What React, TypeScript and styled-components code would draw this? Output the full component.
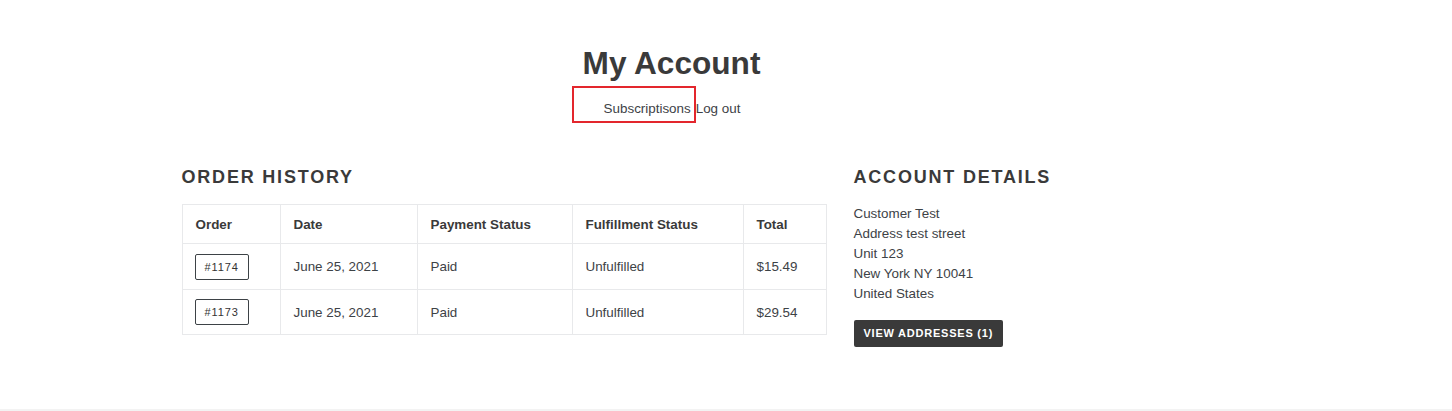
import React from 'react';
import styled, { createGlobalStyle } from 'styled-components';

const GlobalStyle = createGlobalStyle`
    html, body {
        margin: 0;
        padding: 0;
        background: #fff;
    }
    body {
        font-family: 'Liberation Sans', Arial, Helvetica, sans-serif;
        color: #3d4246;
        font-size: 13.4px;
        -webkit-font-smoothing: antialiased;
    }
`;

interface Order {
    number: string;
    date: string;
    payment: string;
    fulfillment: string;
    total: string;
}

const orders: Order[] = [
    { number: '#1174', date: 'June 25, 2021', payment: 'Paid', fulfillment: 'Unfulfilled', total: '$15.49' },
    { number: '#1173', date: 'June 25, 2021', payment: 'Paid', fulfillment: 'Unfulfilled', total: '$29.54' },
];

const addressLines = ['Customer Test', 'Address test street', 'Unit 123', 'New York NY 10041', 'United States'];

const Page = styled.main`
    height: 409px;
    border-bottom: 2px solid #f3f3f3;
`;

const Container = styled.div`
    width: 1090px;
    margin: 0 auto;
    padding-left: 1px;
`;

const Header = styled.header`
    padding: 44px 110px 0 0;
    text-align: center;
`;

const Title = styled.h1`
    margin: 0;
    font-size: 31.6px;
    line-height: 38px;
    font-weight: 700;
    color: #3a3a3a;
`;

const Nav = styled.nav`
    display: flex;
    justify-content: center;
    align-items: flex-end;
    padding-right: 31px;
    margin-top: 4px;
`;

const NavLink = styled.a<{ $outlined?: boolean }>`
    display: inline-block;
    color: #3d4246;
    text-decoration: none;
    line-height: 16px;
    border: ${p => (p.$outlined ? '2px solid #e3262d' : 'none')};
    padding: ${p => (p.$outlined ? '13px 3px 4px 30px' : '0 0 6px 0')};
`;

const Columns = styled.div`
    display: grid;
    grid-template-columns: 645px 1fr;
    column-gap: 27px;
    margin-top: 43px;
`;

const SectionTitle = styled.h2`
    margin: 0 0 16px;
    font-size: 18px;
    line-height: 22px;
    font-weight: 700;
    letter-spacing: 0.1em;
    text-transform: uppercase;
    color: #3a3a3a;
`;

const Table = styled.table`
    width: 645px;
    border-collapse: collapse;
    border: 1px solid #e8e9eb;
    table-layout: fixed;

    th, td {
        border: 1px solid #e8e9eb;
        text-align: left;
        padding: 0 0 0 13px;
    }
    th {
        font-weight: 700;
        color: #3a3a3a;
        height: 38px;
    }
    td {
        height: 44px;
    }
    tbody tr:first-child td {
        height: 45px;
    }
    td:first-child {
        padding-left: 12px;
    }
`;

const OrderTag = styled.a`
    display: inline-block;
    border: 1px solid #3d4246;
    border-radius: 2px;
    padding: 0 9px;
    height: 24px;
    line-height: 24px;
    font-size: 11px;
    letter-spacing: 0.08em;
    color: #333;
    text-decoration: none;
`;

const Address = styled.div`
    margin-top: 2px;
    line-height: 20px;
`;

const DarkButton = styled.a`
    display: inline-block;
    margin-top: 16px;
    background: #3a3a3a;
    color: #fff;
    border-radius: 2px;
    padding: 0 10px;
    height: 27px;
    line-height: 27px;
    font-size: 11px;
    font-weight: 700;
    letter-spacing: 0.07em;
    text-transform: uppercase;
    text-decoration: none;
`;

const App: React.FC = () => {
    return (
        <Page>
            <GlobalStyle />
            <Container>
                <Header>
                    <Title>My Account</Title>
                    <Nav>
                        <NavLink $outlined href="#">Subscriptisons</NavLink>
                        <NavLink href="#">Log out</NavLink>
                    </Nav>
                </Header>
                <Columns>
                    <section>
                        <SectionTitle>Order History</SectionTitle>
                        <Table>
                            <colgroup>
                                <col style={{ width: 98 }} />
                                <col style={{ width: 137 }} />
                                <col style={{ width: 155 }} />
                                <col style={{ width: 171 }} />
                                <col />
                            </colgroup>
                            <thead>
                                <tr>
                                    <th>Order</th>
                                    <th>Date</th>
                                    <th>Payment Status</th>
                                    <th>Fulfillment Status</th>
                                    <th>Total</th>
                                </tr>
                            </thead>
                            <tbody>
                                {orders.map(order => (
                                    <tr key={order.number}>
                                        <td>
                                            <OrderTag href="#">{order.number}</OrderTag>
                                        </td>
                                        <td>{order.date}</td>
                                        <td>{order.payment}</td>
                                        <td>{order.fulfillment}</td>
                                        <td>{order.total}</td>
                                    </tr>
                                ))}
                            </tbody>
                        </Table>
                    </section>
                    <section>
                        <SectionTitle>Account Details</SectionTitle>
                        <Address>
                            {addressLines.map(line => (
                                <div key={line}>{line}</div>
                            ))}
                        </Address>
                        <DarkButton href="#">View Addresses (1)</DarkButton>
                    </section>
                </Columns>
            </Container>
        </Page>
    );
};

export default App;
